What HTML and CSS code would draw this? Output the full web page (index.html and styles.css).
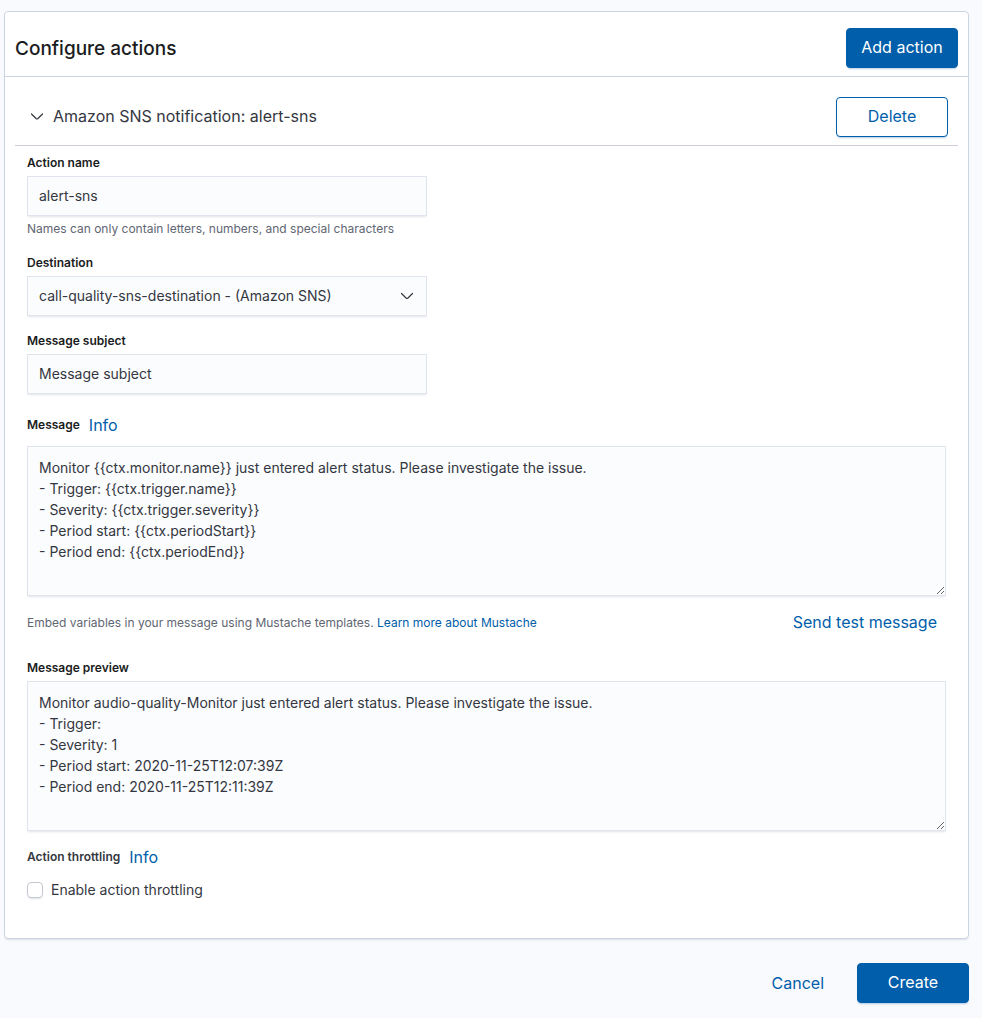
FILE: index.html
```html
<!DOCTYPE html>
<html lang="en">
<head>
<meta charset="utf-8">
<meta name="viewport" content="width=device-width, initial-scale=1">
<title>Configure actions</title>
<link rel="stylesheet" href="styles.css">
</head>
<body>
<form class="page">
  <section class="panel">
    <header class="panel-header">
      <h1 class="title">Configure actions</h1>
      <button type="button" class="btn btn-fill">Add action</button>
    </header>
    <div class="action">
      <div class="action-header">
        <button type="button" class="toggle" aria-expanded="true">
          <svg class="chevron" viewBox="0 0 16 16" aria-hidden="true"><path d="M2.5 6l4.8 4.7q.7.6 1.4 0l4.8-4.7"/></svg>
          <span>Amazon SNS notification: alert-sns</span>
        </button>
        <button type="button" class="btn btn-outline">Delete</button>
      </div>
      <div class="fields">
        <div class="row">
          <label class="label" for="name">Action name</label>
          <input class="control" id="name" type="text" value="alert-sns">
          <p class="help">Names can only contain letters, numbers, and special characters</p>
        </div>
        <div class="row">
          <label class="label" for="destination">Destination</label>
          <div class="select-wrap">
            <select class="control" id="destination"><option>call-quality-sns-destination - (Amazon SNS)</option></select>
            <svg class="chevron select-icon" viewBox="0 0 16 16" aria-hidden="true"><path d="M2.5 5.5l4.8 4.7q.7.6 1.4 0l4.8-4.7"/></svg>
          </div>
        </div>
        <div class="row">
          <label class="label" for="subject">Message subject</label>
          <input class="control" id="subject" type="text" value="Message subject">
        </div>
        <div class="label-line message-line">
          <label class="label" for="message">Message</label>
          <a class="link" href="#info">Info</a>
        </div>
        <textarea class="control area" id="message">Monitor {{ctx.monitor.name}} just entered alert status. Please investigate the issue.
- Trigger: {{ctx.trigger.name}}
- Severity: {{ctx.trigger.severity}}
- Period start: {{ctx.periodStart}}
- Period end: {{ctx.periodEnd}}</textarea>
        <div class="message-footer">
          <p class="help">Embed variables in your message using Mustache templates. <a class="help-link" href="#mustache">Learn more about Mustache</a></p>
          <button type="button" class="btn-text">Send test message</button>
        </div>
        <label class="label" for="preview">Message preview</label>
        <textarea class="control area" id="preview" readonly>Monitor audio-quality-Monitor just entered alert status. Please investigate the issue.
- Trigger:
- Severity: 1
- Period start: 2020-11-25T12:07:39Z
- Period end: 2020-11-25T12:11:39Z</textarea>
        <div class="label-line throttle-line">
          <span class="label">Action throttling</span>
          <a class="link" href="#throttling">Info</a>
        </div>
        <label class="check"><input class="checkbox" type="checkbox"><span>Enable action throttling</span></label>
      </div>
    </div>
  </section>
  <footer class="page-footer">
    <button type="button" class="btn-text">Cancel</button>
    <button type="button" class="btn btn-fill">Create</button>
  </footer>
</form>
</body>
</html>
```
FILE: styles.css
```css
* { box-sizing: border-box; }

body {
  margin: 0;
  background: #f9fafe;
  color: #343741;
  font-family: Inter, "Liberation Sans", sans-serif;
  font-size: 14px;
  line-height: 21px;
}

button, input, select, textarea { font: inherit; color: inherit; }
p, h1 { margin: 0; }

.page { padding: 11px 13px 15px 4px; }

.panel {
  background: #fff;
  border: 1px solid #cbd4e4;
  border-radius: 4px;
  box-shadow: 0 2px 2px -1px rgba(152, 162, 179, 0.3);
  padding-bottom: 38px;
}

.panel-header {
  display: flex;
  align-items: center;
  justify-content: space-between;
  padding: 16px 10px 8px;
  border-bottom: 1px solid #cbd4e4;
}

.title {
  padding-top: 2px;
  color: #1a1c21;
  font-size: 19px;
  line-height: 32px;
  font-weight: 500;
}

.btn {
  width: 112px;
  height: 40px;
  padding: 0 12px 2px;
  border: 1px solid #005eaa;
  border-radius: 4px;
  font-size: 16px;
  cursor: pointer;
}

.btn-fill {
  background: #005eaa;
  color: #fff;
  box-shadow: 0 2px 2px -1px rgba(0, 94, 170, 0.3);
}

.btn-outline {
  background: #fff;
  color: #005eaa;
  box-shadow: 0 2px 2px -1px rgba(0, 94, 170, 0.3);
}

.btn-text {
  padding: 0;
  border: 0;
  background: none;
  color: #005eaa;
  font-size: 16px;
  line-height: 24px;
  cursor: pointer;
}

.action { padding: 20px 10px 0; }

.action-header {
  display: flex;
  align-items: center;
  justify-content: space-between;
  padding: 0 10px 8px 14px;
  border-bottom: 1px solid #cdd0da;
}

.toggle {
  display: flex;
  align-items: center;
  gap: 8px;
  padding: 0 0 2px;
  border: 0;
  background: none;
  font-size: 16px;
  line-height: 24px;
}

.chevron {
  width: 16px;
  height: 16px;
  fill: none;
  stroke: #343741;
  stroke-width: 1.2;
  stroke-linecap: round;
  stroke-linejoin: round;
}

.fields { padding: 8px 12px 0; }

.row {
  max-width: 400px;
  margin-bottom: 16px;
}

.label {
  display: block;
  margin-bottom: 4px;
  color: #1a1c21;
  font-size: 12px;
  line-height: 18px;
  font-weight: 600;
}

.control {
  display: block;
  width: 100%;
  height: 40px;
  padding: 0 11px 2px;
  border: 1px solid #e0e4ec;
  border-radius: 0;
  background: #fbfcfe;
  box-shadow: 0 2px 2px -1px rgba(152, 162, 179, 0.3);
  outline: 0;
}

.area {
  height: 150px;
  padding: 10px 11px;
  resize: vertical;
}

.select-wrap { position: relative; }

.select-wrap .control {
  appearance: none;
  padding-right: 40px;
}

.select-icon {
  position: absolute;
  top: 12px;
  right: 12px;
  pointer-events: none;
}

.help {
  padding-top: 4px;
  color: #5f6673;
  font-size: 12px;
  line-height: 18px;
}

.help-link, .link {
  color: #005eaa;
  text-decoration: none;
}

.link {
  font-size: 16px;
  line-height: 24px;
}

.label-line {
  display: flex;
  align-items: center;
  gap: 9px;
}

.label-line .label { margin: 0; }

.message-line { padding: 3px 0 9px; }

.message-footer {
  display: flex;
  align-items: center;
  justify-content: space-between;
  padding: 14px 9px 25px 0;
}

.message-footer .help { padding: 2px 0 0; }

.throttle-line { padding: 14px 0 10px; }

.throttle-line .label { color: #343741; }

.check {
  display: flex;
  width: max-content;
  align-items: center;
  gap: 8px;
}

.checkbox {
  appearance: none;
  width: 16px;
  height: 16px;
  margin: 0;
  border: 1px solid #c4c8d0;
  border-radius: 4px;
  background: #fff;
  box-shadow: 0 2px 2px -1px rgba(152, 162, 179, 0.3);
}

.page-footer {
  display: flex;
  align-items: center;
  justify-content: flex-end;
  gap: 33px;
  padding-top: 24px;
}
```
